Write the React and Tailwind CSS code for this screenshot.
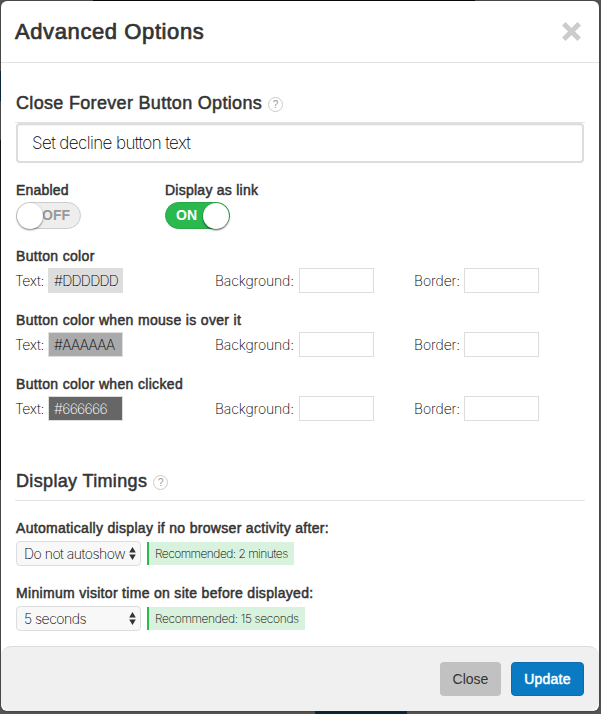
const bold = "font-['Liberation_Sans',Arial,sans-serif] text-[#333] [-webkit-text-stroke:0.5px_#333] whitespace-nowrap";
const light = "font-['Inter',sans-serif] font-extralight whitespace-nowrap";

function Help() {
  return (
    <span className="mb-[3px] flex h-[15px] w-[15px] items-center justify-center rounded-full border border-[#ccc] font-['Liberation_Sans',sans-serif] text-[10px] leading-none text-[#999]">
      ?
    </span>
  );
}

function Swatch({ className = "text-black", children }) {
  return (
    <div className={`flex h-[25px] w-[75px] items-center border border-[#ddd] pl-[5px] text-[14px] tracking-[-0.7px] ${className}`}>
      {children}
    </div>
  );
}

function ColorRow({ title, swatch, value }) {
  return (
    <div className="h-16">
      <div className={`${bold} h-5 pl-px text-[14px] leading-5 tracking-[0.33px]`}>{title}</div>
      <div className={`${light} mt-[2px] flex h-[25px] items-center text-[14px] text-black`}>
        <span className="w-[33px] tracking-[-0.3px]">Text:</span>
        <Swatch className={swatch}>{value}</Swatch>
        <span className="ml-[91px] w-[85px] pl-px tracking-[-0.15px]">Background:</span>
        <Swatch />
        <span className="ml-10 w-[50px] tracking-[-0.1px]">Border:</span>
        <Swatch />
      </div>
    </div>
  );
}

function Select({ children }) {
  return (
    <div className={`${light} ml-px flex h-[25px] w-[125px] items-center justify-between rounded border border-[#ddd] bg-[#f8f8f8] pr-[4px] pl-[7px] text-[14px] tracking-[-0.5px] text-black`}>
      <span>{children}</span>
      <svg className="h-[13px] w-[7px] shrink-0" viewBox="0 0 7 13" fill="#333">
        <path d="M3.5 0 6.8 5.6H.2zM3.5 13 .2 7.4h6.6z" />
      </svg>
    </div>
  );
}

function Timing({ title, value, hint, hintClass }) {
  return (
    <div className="h-[65px]">
      <div className={`${bold} h-5 pl-px text-[14px] leading-5 tracking-[0.31px]`}>{title}</div>
      <div className="mt-[3px] flex items-center">
        <Select>{value}</Select>
        <div className={`${light} ml-1.5 flex h-[23px] items-center border-l-2 border-[#2ab94e] bg-[#d9f2dd] pl-1.5 text-[12px] text-black ${hintClass}`}>
          {hint}
        </div>
      </div>
    </div>
  );
}

export default function App() {
  return (
    <div className="relative h-[714px] w-[601px] overflow-hidden bg-[#555] pt-px pl-px">
      <div className="absolute top-0 left-[93px] h-px w-[382px] bg-black" />
      <div className="absolute top-[711px] left-[315px] h-[3px] w-[92px] bg-[#08263c]" />
      <div className="absolute top-[71px] left-0 h-[30px] w-px bg-[#08263c]" />
      <div className="absolute top-[140px] left-0 h-[340px] w-px bg-[#111]" />
      <div className="relative flex h-[710px] w-[598px] flex-col rounded-[6px] bg-white shadow-[0_0_2px_#222]">
        <div className="flex h-[62px] shrink-0 items-center justify-between border-b border-[#e3e3e3] pr-[18px] pl-[14px]">
          <h1 className={`${bold} text-[22px] leading-[60px] tracking-[0.6px] [-webkit-text-stroke:0.7px_#333]`}>Advanced Options</h1>
          <svg width="19" height="19" viewBox="0 0 19 19" stroke="#ccc" strokeWidth="5">
            <path d="M1.8 1.8 17.2 17.2M17.2 1.8 1.8 17.2" />
          </svg>
        </div>
        <div className="min-h-0 flex-1 px-[14px]">
          <div className="flex h-[60px] items-end gap-1.5 border-b border-[#e3e3e3] pb-[7px] pl-px">
            <h2 className={`${bold} text-[18px] leading-6 tracking-[0.32px]`}>Close Forever Button Options</h2>
            <Help />
          </div>
          <div className={`${light} ml-px flex h-10 w-[568px] items-center rounded border-2 border-[#ddd] pt-[2px] pl-[14px] text-[17px] tracking-[-0.59px] text-black shadow-[inset_0_1px_1px_rgba(0,0,0,0.05)]`}>
            Set decline button text
          </div>
          <div className="mt-[17px] flex h-[66px]">
            <div className="w-[150px]">
              <div className={`${bold} h-[22px] pl-px text-[14px] leading-5 tracking-[0.2px]`}>Enabled</div>
              <div className="ml-px flex h-[27px] w-[65px] items-center rounded-full border border-[#ccc] bg-[#eee]">
                <span className="relative z-10 h-[26px] w-[26px] shrink-0 rounded-full bg-white shadow-[0_1px_2px_rgba(0,0,0,0.5)]" />
                <span className="-ml-px font-['Liberation_Sans',sans-serif] text-[14px] font-bold text-[#999]">OFF</span>
              </div>
            </div>
            <div>
              <div className={`${bold} h-[22px] text-[14px] leading-5 tracking-[0.25px]`}>Display as link</div>
              <div className="flex h-[27px] w-[65px] items-center justify-between rounded-full border border-[#28a745] bg-[#2ab94e]">
                <span className="pl-[10px] font-['Liberation_Sans',sans-serif] text-[14px] font-bold text-white">ON</span>
                <span className="h-[26px] w-[26px] rounded-full bg-white shadow-[0_1px_2px_rgba(0,0,0,0.7)]" />
              </div>
            </div>
          </div>
          <ColorRow title="Button color" swatch="bg-[#ddd] text-black" value="#DDDDDD" />
          <ColorRow title="Button color when mouse is over it" swatch="bg-[#aaa] text-black" value="#AAAAAA" />
          <ColorRow title="Button color when clicked" swatch="bg-[#666] text-white" value="#666666" />
          <div className="flex h-[63px] items-end gap-1.5 border-b border-[#e3e3e3] pb-[7px] pl-px">
            <h2 className={`${bold} text-[18px] leading-6 tracking-[0.35px]`}>Display Timings</h2>
            <Help />
          </div>
          <div className="mt-[17px]">
            <Timing title="Automatically display if no browser activity after:" value="Do not autoshow" hint="Recommended: 2 minutes" hintClass="w-[147px] tracking-[-0.54px]" />
            <Timing title="Minimum visitor time on site before displayed:" value="5 seconds" hint="Recommended: 15 seconds" hintClass="w-[158px] tracking-[-0.36px]" />
          </div>
        </div>
        <div className="flex h-[65px] shrink-0 items-center justify-end gap-[10px] rounded-[10px] border-t border-[#ddd] bg-[#f0f0f0] pr-[15px]">
          <button className="h-[34px] w-[61px] rounded bg-[#c1c1c1] font-['Liberation_Sans',sans-serif] text-[14px] text-[#333]">Close</button>
          <button className="h-[34px] w-[73px] rounded border border-[#0a6db0] bg-[#0a7bc2] font-['Liberation_Sans',sans-serif] text-[14px] tracking-[0.2px] text-white [-webkit-text-stroke:0.5px_white]">Update</button>
        </div>
      </div>
    </div>
  );
}
